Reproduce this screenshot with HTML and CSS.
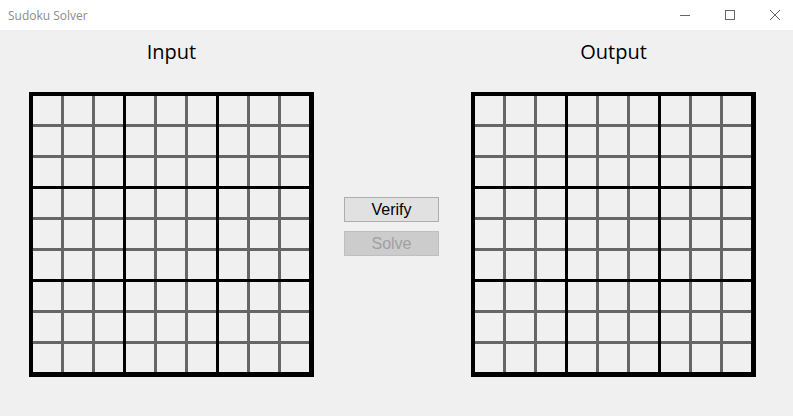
FILE: index.html
```html
<!DOCTYPE html>
<html>
<head>
<meta charset="utf-8">
<title>Sudoku Solver</title>
<link rel="stylesheet" href="styles.css">
</head>
<body>
<div class="window">
  <div class="titlebar">
    <span class="app-title">Sudoku Solver</span>
    <div class="controls">
      <span class="ctl"><svg width="10" height="10" viewBox="0 0 10 10"><line x1="0" y1="5.5" x2="10" y2="5.5" stroke="#666" stroke-width="1"/></svg></span>
      <span class="ctl"><svg width="10" height="10" viewBox="0 0 10 10"><rect x="0.5" y="0.5" width="9" height="9" fill="none" stroke="#666" stroke-width="1"/></svg></span>
      <span class="ctl"><svg width="10" height="10" viewBox="0 0 10 10"><path d="M0 0 L10 10 M10 0 L0 10" stroke="#666" stroke-width="1"/></svg></span>
    </div>
  </div>
  <div class="main">
    <div class="panel">
      <div class="heading">Input</div>
      <div class="board" id="input-board"></div>
    </div>
    <div class="actions">
      <button class="btn">Verify</button>
      <button class="btn btn-disabled" disabled>Solve</button>
    </div>
    <div class="panel">
      <div class="heading">Output</div>
      <div class="board" id="output-board"></div>
    </div>
  </div>
</div>
<script>
  document.querySelectorAll('.board').forEach(function (board) {
    for (var b = 0; b < 9; b++) {
      var box = document.createElement('div');
      box.className = 'box';
      for (var c = 0; c < 9; c++) {
        var cell = document.createElement('div');
        cell.className = 'cell';
        box.appendChild(cell);
      }
      board.appendChild(box);
    }
  });
</script>
</body>
</html>
```
FILE: styles.css
```css
html, body {
  margin: 0;
  padding: 0;
  background: #f0f0f0;
  width: 793px;
  height: 416px;
  overflow: hidden;
}

.window {
  width: 793px;
  height: 416px;
  display: flex;
  flex-direction: column;
}

.titlebar {
  height: 30px;
  background: #ffffff;
  display: flex;
  align-items: center;
  justify-content: space-between;
  padding-left: 8px;
  box-sizing: border-box;
}

.app-title {
  font-family: "Open Sans", "Noto Sans", sans-serif;
  font-size: 12px;
  color: #8c8c8c;
}

.controls {
  display: flex;
  gap: 35px;
  margin-right: 13px;
  align-items: center;
}

.ctl {
  width: 10px;
  height: 10px;
  display: block;
}

.ctl svg {
  display: block;
}

.main {
  display: flex;
  padding-left: 29px;
  padding-top: 10px;
}

.panel {
  width: 285px;
  display: flex;
  flex-direction: column;
  align-items: center;
}

.heading {
  font-family: "Open Sans", "Noto Sans", sans-serif;
  font-size: 20px;
  line-height: 24px;
  height: 24px;
  color: #000;
  margin-bottom: 28px;
}

.board {
  width: 285px;
  height: 285px;
  box-sizing: border-box;
  border-style: solid;
  border-color: #000;
  border-width: 4px 5px 5px 4px;
  background: #000;
  display: grid;
  grid-template-columns: repeat(3, 90px);
  grid-template-rows: repeat(3, 90px);
  gap: 3px;
}

.box {
  background: #666666;
  display: grid;
  grid-template-columns: repeat(3, 28px);
  grid-template-rows: repeat(3, 28px);
  gap: 3px;
}

.cell {
  background: #f0f0f0;
}

.actions {
  width: 157px;
  box-sizing: border-box;
  padding-left: 30px;
  padding-top: 157px;
  display: flex;
  flex-direction: column;
  gap: 9px;
}

.btn {
  width: 95px;
  height: 25px;
  margin: 0;
  padding: 0;
  border: 1px solid #adadad;
  background: #e1e1e1;
  font-family: "Liberation Sans", Arial, sans-serif;
  font-size: 16px;
  color: #000;
  line-height: 23px;
}

.btn-disabled {
  background: #cccccc;
  border-color: #bfbfbf;
  color: #a0a0a0;
}
```
